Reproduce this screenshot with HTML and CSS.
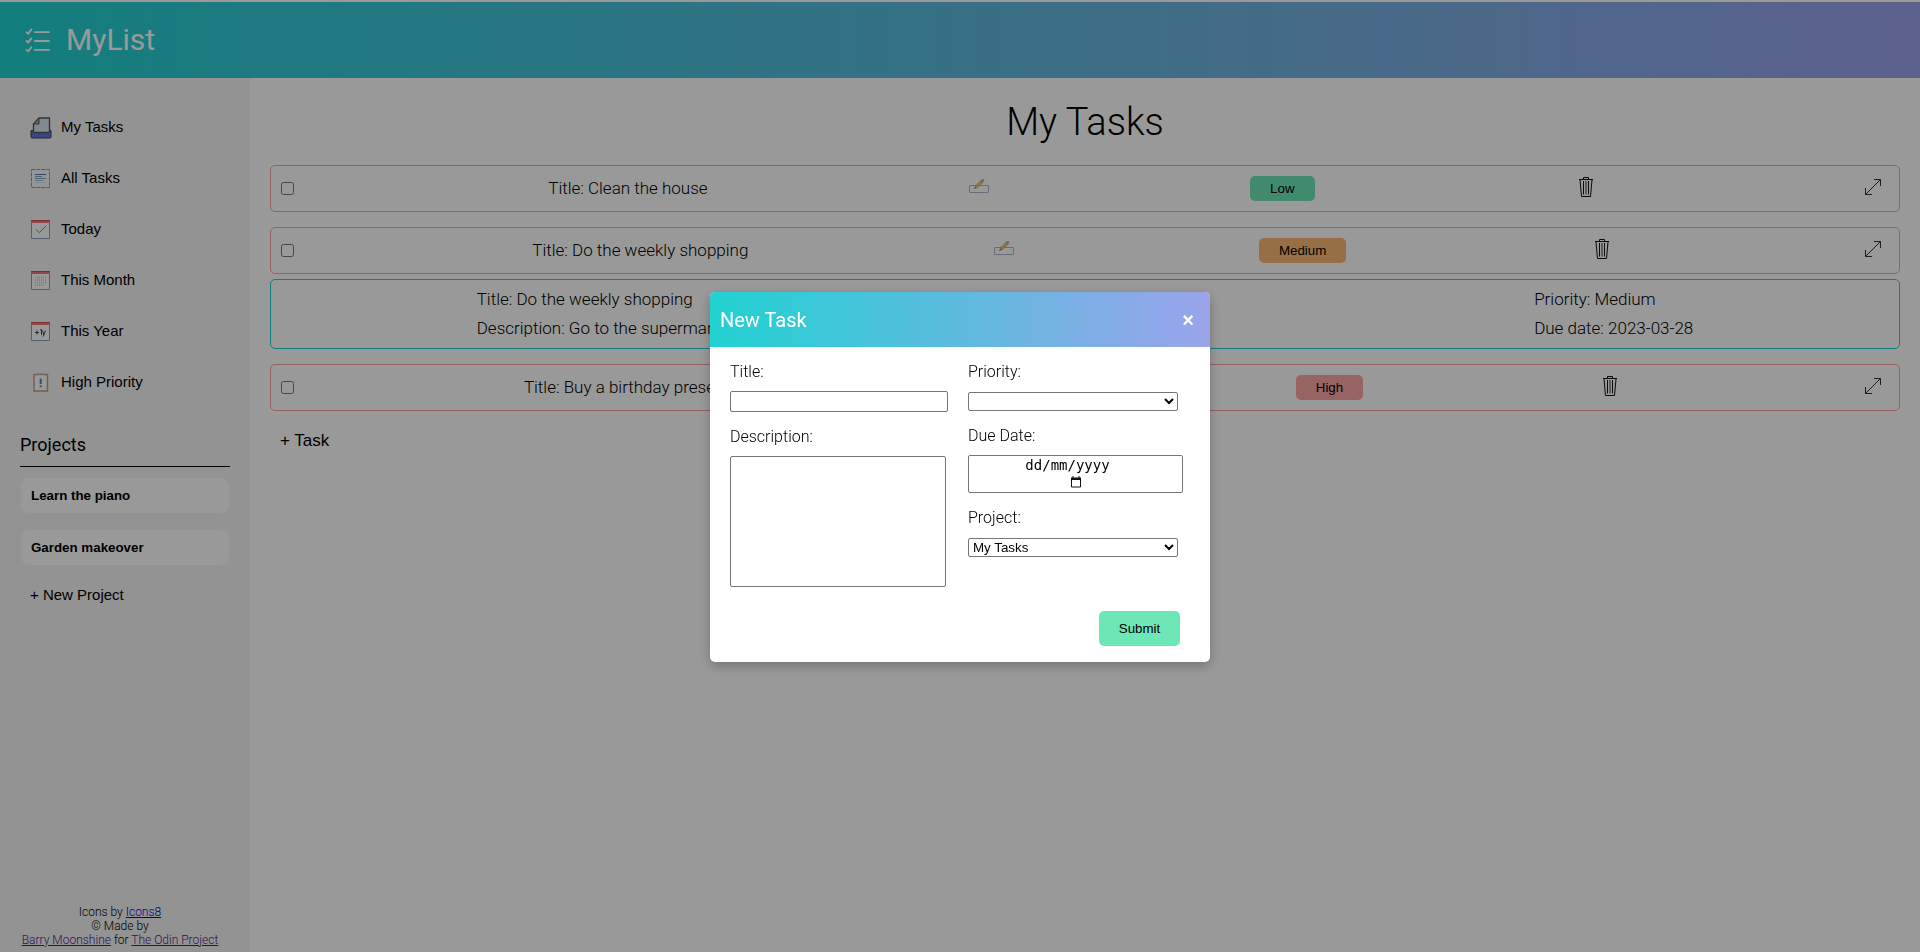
FILE: index.html
```html
<!DOCTYPE html>
<html lang="en-GB">
<head>
<meta charset="utf-8">
<title>MyList</title>
<meta name="viewport" content="width=device-width, initial-scale=1">
<link rel="stylesheet" href="styles.css">
</head>
<body>
<svg class="sprite" aria-hidden="true">
  <symbol id="edit" viewBox="0 0 20 20">
    <rect x=".5" y="8.500" width="19" height="7" rx=".5" fill="none" stroke="#b0b5c8"/>
    <path d="M5.500 11.500 7 8.500l5-5 1.800 1.800-5 5z" fill="#f0cf60" stroke="#8a7440" stroke-width=".5"/>
    <path d="m12 3.500 1-1 1.800 1.800-1 1z" fill="#b6dcfe" stroke="#667" stroke-width=".3"/>
    <circle cx="14" cy="3.300" r="1.200" fill="#f78f8f"/>
    <path d="m5.500 11.500.6-1.300.8.700z" fill="#333"/>
  </symbol>
  <symbol id="trash" viewBox="0 0 24 24" fill="none" stroke="#111">
    <path d="M5 4.500h14"/>
    <path d="M9.500 4V2.500h5V4"/>
    <path d="m6 5 1.500 16.500h9L18 5"/>
    <path d="M9.500 6v13.500M14.500 6v13.500"/>
    <path d="M12 6v13.500" stroke="#777" stroke-width="1.500"/>
  </symbol>
  <symbol id="expand" viewBox="0 0 20 20" fill="none" stroke="#333">
    <path d="M2.500 17.500 17.500 2.500M11 2.500h6.500V9M2.500 11v6.500H9"/>
  </symbol>
</svg>

<header class="topbar">
  <svg class="logo" viewBox="0 0 24 24" fill="none" stroke="#fff" stroke-width="1.800" stroke-linecap="round" stroke-linejoin="round" aria-hidden="true">
    <path d="M9.500 4H23M9.500 12.500H23M9.500 21H23M1.500 4l1.500 1.500L6 1.500M1.500 12.500 3 14l3-4M1.500 21 3 22.500l3-4"/>
  </svg>
  <span class="brand">MyList</span>
</header>

<div class="layout">
  <aside class="sidebar">
    <nav class="nav">
      <button class="nav-item" type="button">
        <svg viewBox="0 0 24 24" aria-hidden="true"><path d="M2 15.500h20v6.500a1 1 0 0 1-1 1H3a1 1 0 0 1-1-1z" fill="#6676d8" stroke="#3d4360"/><path d="M10 3h10.500v13.500q0 1-1 1H5.500q-1 0-1-1V9z" fill="#d5e6f2" stroke="#555" stroke-width="1.300"/><path d="M10 3v6H4.500z" fill="#a5b3bd" stroke="#555"/></svg>
        My Tasks
      </button>
      <button class="nav-item" type="button">
        <svg viewBox="0 0 24 24" fill="none" aria-hidden="true"><path d="M2.500 3.500h18v18h-18z" fill="#f5f9fc" stroke="#8798ac" stroke-dasharray="4 1"/><path d="M6 8.500h11" stroke="#4a78ad"/><path d="M6 10.500h7M6 12.500h11" stroke="#7da5c9"/><path d="M6 14.500h8" stroke="#a9c1d8"/><path d="M6 16.500h11" stroke="#dce4ec"/></svg>
        All Tasks
      </button>
      <button class="nav-item" type="button">
        <svg viewBox="0 0 24 24" fill="none" aria-hidden="true"><path d="M2.500 3.500h18v18h-18z" fill="#fff" stroke="#8ba0b8"/><path d="M2 3h19v3H2z" fill="#f27878"/><path d="M2 3.500h19" stroke="#c65050"/><path d="m7 12.500 3.200 3.200L17 9" stroke="#5a9e78"/></svg>
        Today
      </button>
      <button class="nav-item" type="button">
        <svg viewBox="0 0 24 24" fill="none" aria-hidden="true"><path d="M2.500 3.500h18v18h-18z" fill="#fff" stroke="#8ba0b8"/><path d="M2 3h19v3H2z" fill="#f27878"/><path d="M2 3.500h19" stroke="#c65050"/><path d="M8 9.500h9M6 12h11M6 14.500h11M6 17h9" stroke="#c3c9cf" stroke-width="1.500" stroke-dasharray="1 1"/></svg>
        This Month
      </button>
      <button class="nav-item" type="button">
        <svg viewBox="0 0 24 24" fill="none" aria-hidden="true"><path d="M2.500 3.500h18v18h-18z" fill="#fff" stroke="#8ba0b8"/><path d="M2 3h19v3H2z" fill="#f27878"/><path d="M2 3.500h19" stroke="#c65050"/><path d="M6 13.500h4M8 11.500v4M11 11l1.500-.5V16M13.500 11.500l1.500 4 1.500-4M15 15l-1 2.500" stroke="#444a52"/></svg>
        This Year
      </button>
      <button class="nav-item" type="button">
        <svg viewBox="0 0 24 24" fill="none" aria-hidden="true"><path d="M5 4.500h13.500v16.500H5z" fill="#fff" stroke="#c99878" stroke-width="1.400"/><path d="M8.500 5V3.500h2q1-1.500 2 0h2.500V5z" fill="#b8bcc4"/><path d="M11.700 8.500v5.500M11.700 15.500v1.700" stroke="#4788c7" stroke-width="2"/></svg>
        High Priority
      </button>
    </nav>
    <h2 class="projects-title">Projects</h2>
    <div class="projects">
      <button class="project" type="button">Learn the piano</button>
      <button class="project" type="button">Garden makeover</button>
    </div>
    <button class="new-project" type="button">+ New Project</button>
    <footer class="credits">
      Icons by <a class="link-new" href="#icons8">Icons8</a><br>
      © Made by<br>
      <a href="#barry">Barry Moonshine</a> for <a href="#odin">The Odin Project</a>
    </footer>
  </aside>

  <main class="main">
    <h1 class="page-title">My Tasks</h1>
    <ul class="tasks">
      <li class="task">
        <input class="check" type="checkbox" aria-label="Clean the house done">
        <span>Title: Clean the house</span>
        <button class="icon-btn" type="button" aria-label="Edit"><svg class="icon-edit"><use href="#edit"/></svg></button>
        <button class="badge low" type="button">Low</button>
        <button class="icon-btn" type="button" aria-label="Delete"><svg class="icon-trash"><use href="#trash"/></svg></button>
        <button class="icon-btn last" type="button" aria-label="Expand"><svg class="icon-expand"><use href="#expand"/></svg></button>
      </li>
      <li class="task open">
        <input class="check" type="checkbox" aria-label="Do the weekly shopping done">
        <span>Title: Do the weekly shopping</span>
        <button class="icon-btn" type="button" aria-label="Edit"><svg class="icon-edit"><use href="#edit"/></svg></button>
        <button class="badge medium" type="button">Medium</button>
        <button class="icon-btn" type="button" aria-label="Delete"><svg class="icon-trash"><use href="#trash"/></svg></button>
        <button class="icon-btn last" type="button" aria-label="Expand"><svg class="icon-expand"><use href="#expand"/></svg></button>
      </li>
      <li class="details">
        <div class="details-main">
          <span>Title: Do the weekly shopping</span>
          <span>Description: Go to the supermarket</span>
        </div>
        <div class="details-side">
          <span>Priority: Medium</span>
          <span>Due date: 2023-03-28</span>
        </div>
      </li>
      <li class="task">
        <input class="check" type="checkbox" aria-label="Buy a birthday present done">
        <span>Title: Buy a birthday present for Sarah</span>
        <button class="icon-btn" type="button" aria-label="Edit"><svg class="icon-edit"><use href="#edit"/></svg></button>
        <button class="badge high" type="button">High</button>
        <button class="icon-btn" type="button" aria-label="Delete"><svg class="icon-trash"><use href="#trash"/></svg></button>
        <button class="icon-btn last" type="button" aria-label="Expand"><svg class="icon-expand"><use href="#expand"/></svg></button>
      </li>
    </ul>
    <button class="add-task" type="button">+ Task</button>
  </main>
</div>

<div class="overlay">
  <section class="modal" role="dialog" aria-modal="true" aria-labelledby="modal-title">
    <div class="modal-head">
      <h2 class="modal-title" id="modal-title">New Task</h2>
      <button class="close" type="button" aria-label="Close">×</button>
    </div>
    <form class="form">
      <div class="col">
        <label for="title">Title:</label>
        <input class="text" id="title" type="text">
        <label for="desc">Description:</label>
        <textarea class="area" id="desc"></textarea>
      </div>
      <div class="col">
        <label for="priority">Priority:</label>
        <select class="select" id="priority"><option></option><option>Low</option><option>Medium</option><option>High</option></select>
        <label for="due">Due Date:</label>
        <div class="date">
          <input class="date-text" id="due" type="text" placeholder="dd/mm/yyyy">
          <button class="date-btn" type="button" aria-label="Show date picker">
            <svg viewBox="0 0 12 12"><path d="M1.500 2.500h9v8.500h-9z" fill="none" stroke="#111"/><path d="M1 1.500h10V4H1zM2.500 0h1v2h-1zM8.500 0h1v2h-1z" fill="#111"/></svg>
          </button>
        </div>
        <label for="project">Project:</label>
        <select class="select" id="project"><option>My Tasks</option><option>Learn the piano</option><option>Garden makeover</option></select>
      </div>
      <button class="submit" type="submit">Submit</button>
    </form>
  </section>
</div>
</body>
</html>
```
FILE: styles.css
```css
* { box-sizing: border-box; }

body {
  margin: 0;
  min-height: 100vh;
  display: flex;
  flex-direction: column;
  background: #fff;
  color: #000;
  font: 300 16px/19px Roboto, sans-serif;
}

button {
  border: 0;
  padding: 0;
  background: none;
  color: #000;
  font-family: "Liberation Sans", sans-serif;
  line-height: 15px;
  cursor: pointer;
}

h1, h2, ul { margin: 0; padding: 0; }
ul { list-style: none; }
.sprite { display: none; }

.topbar {
  display: flex;
  align-items: center;
  gap: 16px;
  height: 78px;
  padding: 0 25px;
  border-top: 2px solid #fff;
  background: linear-gradient(90deg, #20d2d2, #9ba3eb);
}
.logo { width: 25px; height: 25px; }
.brand { color: #fff; font-size: 30px; line-height: 36px; font-weight: 400; }

.layout { flex: 1; display: flex; }

.sidebar {
  flex: 0 0 250px;
  display: flex;
  flex-direction: column;
  padding: 23px 20px 5px;
  background: #f5f5f5;
}
.nav { display: flex; flex-direction: column; }
.nav-item {
  display: flex;
  align-items: center;
  gap: 8px;
  height: 51px;
  padding: 0 9px;
  font-size: 15px;
  line-height: 17px;
}
.nav-item svg { width: 24px; height: 24px; }
.projects-title {
  margin: 27px 0 0;
  padding-bottom: 10px;
  border-bottom: 1px solid #000;
  font-size: 18px;
  line-height: 22px;
  font-weight: 400;
}
.projects { display: flex; flex-direction: column; gap: 17px; padding: 11px 1px 0; }
.project {
  height: 35px;
  padding: 0 10px;
  border-radius: 8px;
  background: #fff;
  text-align: left;
  font-weight: 700;
}
.new-project { align-self: flex-start; margin: 21px 10px; font-size: 15px; line-height: 17px; }
.credits { margin-top: auto; padding-right: 10px; text-align: center; font-size: 12px; line-height: 14px; }
.credits a { color: #551a8b; }
.credits .link-new { color: #0000ee; }

.main { flex: 1; padding: 21px 20px 20px; }
.page-title { text-align: center; font-size: 38px; line-height: 47px; font-weight: 300; }
.tasks { display: flex; flex-direction: column; gap: 15px; margin-top: 19px; font-size: 17px; }
.task {
  display: flex;
  align-items: center;
  justify-content: space-between;
  min-height: 47px;
  padding: 10px;
  border: 1px solid #ffa0a0;
  border-radius: 5px;
}
.open { margin-bottom: -10px; }
.check { width: 13px; height: 13px; margin: 0 3px 0 0; }
.icon-btn { width: 40px; height: 24px; padding-bottom: 3px; display: flex; align-items: center; justify-content: center; }
.last { width: 32px; }
.icon-edit { width: 20px; height: 20px; }
.icon-trash { flex: none; width: 24px; height: 24px; }
.icon-expand { width: 20px; height: 20px; }
.badge { height: 25px; padding: 0 20px; border-radius: 5px; }
.low, .submit { background: #6ee7b7; }
.medium { background: #fdba74; }
.high { background: #fca5a5; }
.details {
  display: flex;
  justify-content: space-around;
  padding: 10px;
  border: 1px solid #20d2d2;
  border-radius: 5px;
}
.details-main, .details-side { display: flex; flex-direction: column; gap: 10px; }
.details-main { flex-basis: 666px; }
.add-task { margin: 20px 10px; font-size: 17px; line-height: 19px; }

.overlay {
  position: fixed;
  inset: 0;
  display: flex;
  align-items: center;
  justify-content: center;
  padding-top: 2px;
  background: rgba(0, 0, 0, .4);
}
.modal {
  width: 500px;
  border-radius: 5px;
  overflow: hidden;
  background: #fff;
  box-shadow: 0 4px 12px rgba(0, 0, 0, .25);
}
.modal-head {
  display: flex;
  align-items: center;
  justify-content: space-between;
  height: 55px;
  padding: 0 16px 0 10px;
  background: linear-gradient(90deg, #20d2d2, #9ba3eb);
}
.modal-title { color: #fff; font-size: 20px; line-height: 24px; font-weight: 400; }
.close { color: #fff; font-size: 20px; line-height: 24px; font-weight: 700; }
.form {
  display: grid;
  grid-template-columns: 218px 1fr;
  column-gap: 20px;
  padding: 15px 20px 16px;
}
.col { display: flex; flex-direction: column; align-items: flex-start; }
.col label { margin-bottom: 10px; }
.text, .area, .select, .date {
  border: 1px solid #767676;
  border-radius: 2px;
  background: #fff;
  color: #000;
  font-family: "Liberation Sans", sans-serif;
}
.text { width: 218px; height: 21px; margin: 0 0 15px; }
.area { width: 216px; height: 131px; margin: 0; resize: none; }
.select { width: 210px; height: 19px; margin: 1px 0 15px; }
.date {
  display: flex;
  flex-direction: column;
  align-items: center;
  width: 215px;
  height: 38px;
  margin-bottom: 15px;
}
.date-text {
  width: 100%;
  height: 19px;
  padding: 0 16px 0 0;
  border: 0;
  background: none;
  text-align: center;
  font: 14px/19px "DejaVu Sans Mono", monospace;
}
.date-text::placeholder { color: #000; }
.date-btn { width: 12px; height: 12px; margin-top: 1px; }
.date-btn svg { display: block; width: 12px; height: 12px; }
.submit {
  grid-column: 2;
  justify-self: end;
  width: 81px;
  height: 35px;
  margin: 24px 10px 0 0;
  border-radius: 5px;
}
```
